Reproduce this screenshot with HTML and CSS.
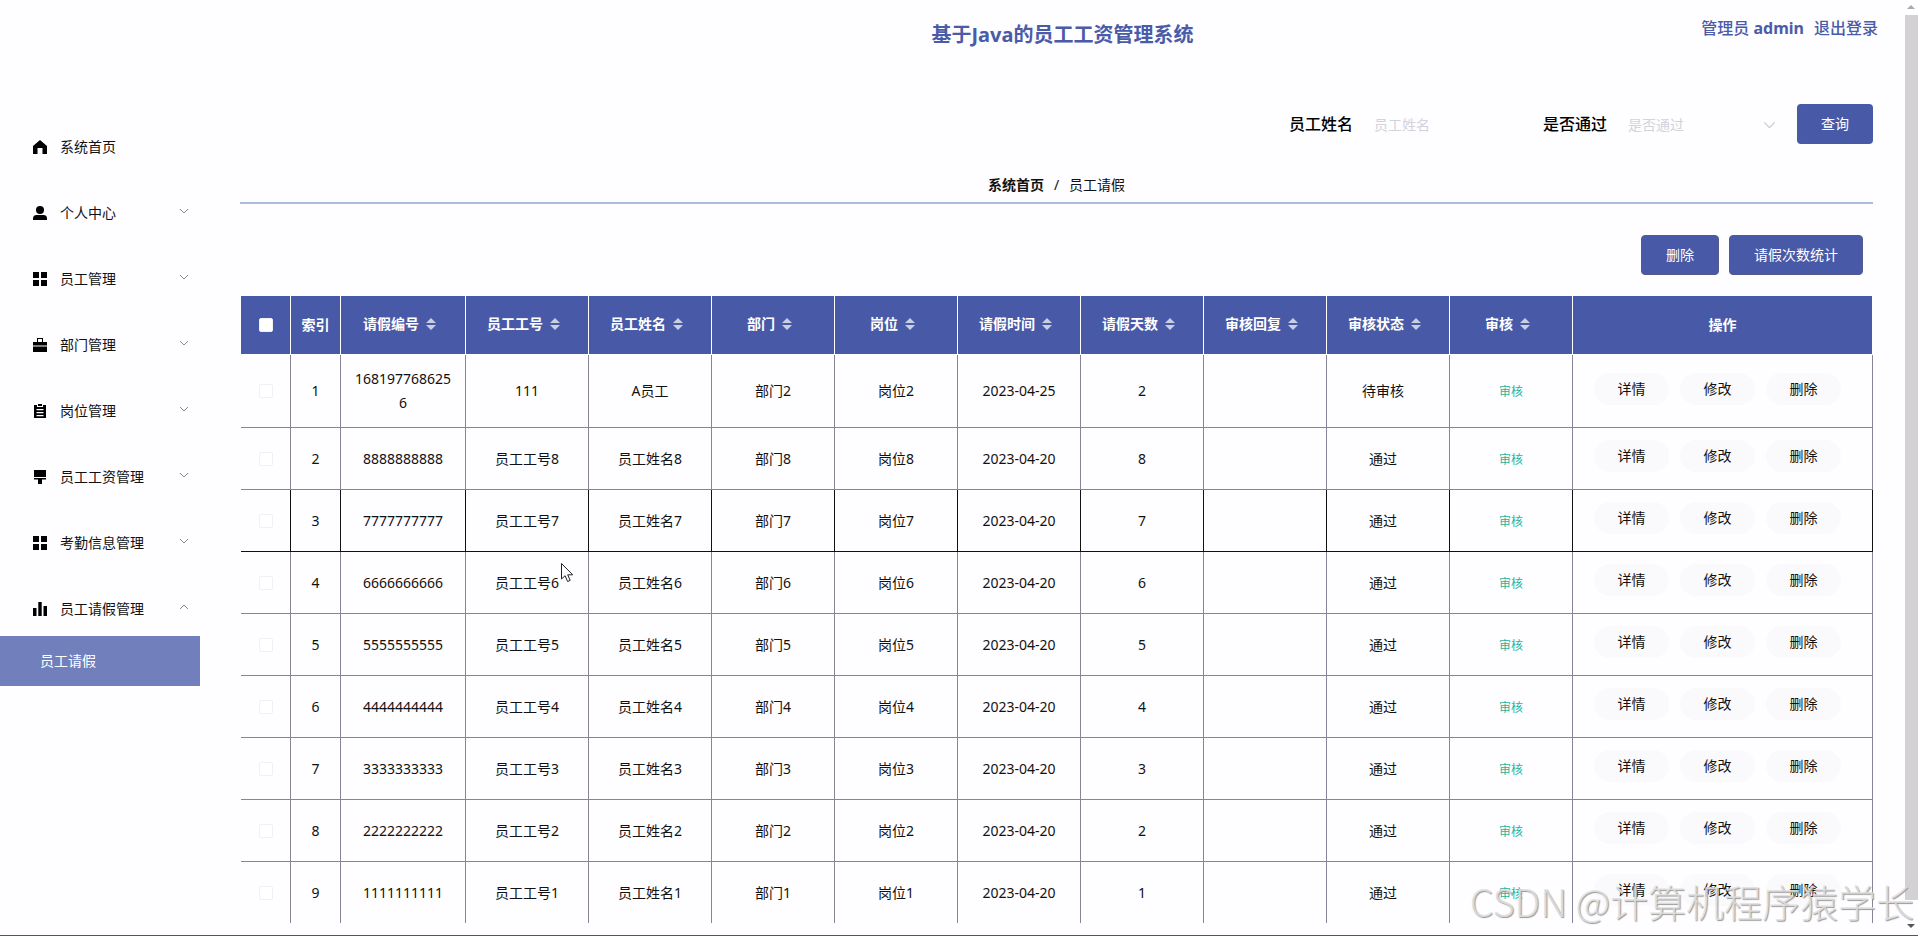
FILE: index.html
```html
<!DOCTYPE html>
<html lang="zh-CN">
<head>
    <meta charset="UTF-8">
    <meta name="viewport" content="width=device-width, initial-scale=1.0">
    <title>基于Java的员工工资管理系统</title>
    <link rel="stylesheet" href="styles.css">
</head>
<body>
    <div class="page">
        <div class="app">
            <header class="header">
                <h1 class="title">基于Java的员工工资管理系统</h1>
                <div class="user">
                    <span>管理员 <b>admin</b></span>
                    <a href="#">退出登录</a>
                </div>
            </header>

            <div class="body">
                <nav class="sidebar">
                    <a class="menu-item" href="#">
                        <svg class="icon" viewBox="0 0 14 14"><path d="M7 0 14 6v8H9.500V8h-5v6H0V6z"/></svg>
                        <span>系统首页</span>
                    </a>
                    <a class="menu-item" href="#">
                        <svg class="icon" viewBox="0 0 14 14"><circle cx="7" cy="4" r="4"/><path d="M0 14v-1.500Q0 9 3.500 9h7Q14 9 14 12.500V14z"/></svg>
                        <span>个人中心</span>
                        <svg class="arrow" viewBox="0 0 10 6"><path d="M1 1l4 4 4-4"/></svg>
                    </a>
                    <a class="menu-item" href="#">
                        <svg class="icon" viewBox="0 0 14 14"><path d="M0 0h6v6H0zM8 0h6v6H8zM0 8h6v6H0zM8 8h6v6H8z"/></svg>
                        <span>员工管理</span>
                        <svg class="arrow" viewBox="0 0 10 6"><path d="M1 1l4 4 4-4"/></svg>
                    </a>
                    <a class="menu-item" href="#">
                        <svg class="icon" viewBox="0 0 14 14"><path d="M4 0h6v4h4v3.500H0V4h4zM5 1v3h4V1zM0 8.500h14V14H0z" fill-rule="evenodd"/></svg>
                        <span>部门管理</span>
                        <svg class="arrow" viewBox="0 0 10 6"><path d="M1 1l4 4 4-4"/></svg>
                    </a>
                    <a class="menu-item" href="#">
                        <svg class="icon" viewBox="0 0 14 14"><path d="M1 1h3v2h6V1h3v13H1zM3.500 5v1.200h7V5zM3.500 8v1.200h7V8zM3.500 11v1.200h7V11z" fill-rule="evenodd"/><path d="M5 0h4v2H5z"/></svg>
                        <span>岗位管理</span>
                        <svg class="arrow" viewBox="0 0 10 6"><path d="M1 1l4 4 4-4"/></svg>
                    </a>
                    <a class="menu-item" href="#">
                        <svg class="icon" viewBox="0 0 14 14"><path d="M1 0h12v7H1zM1 8h12v1.500H9V14H5V9.500H1z"/></svg>
                        <span>员工工资管理</span>
                        <svg class="arrow" viewBox="0 0 10 6"><path d="M1 1l4 4 4-4"/></svg>
                    </a>
                    <a class="menu-item" href="#">
                        <svg class="icon" viewBox="0 0 14 14"><path d="M0 0h6v6H0zM8 0h6v6H8zM0 8h6v6H0zM8 8h6v6H8z"/></svg>
                        <span>考勤信息管理</span>
                        <svg class="arrow" viewBox="0 0 10 6"><path d="M1 1l4 4 4-4"/></svg>
                    </a>
                    <a class="menu-item" href="#">
                        <svg class="icon" viewBox="0 0 14 14"><path d="M0 6h3.500v8H0zM5.300 0h3.400v14H5.300zM10.500 4H14v10h-3.500z"/></svg>
                        <span>员工请假管理</span>
                        <svg class="arrow" viewBox="0 0 10 6"><path d="M1 5l4-4 4 4"/></svg>
                    </a>
                    <a class="submenu-item" href="#">员工请假</a>
                </nav>

                <main class="main">
                    <form class="search">
                        <div class="field">
                            <label for="name">员工姓名</label>
                            <input type="text" id="name" placeholder="员工姓名">
                        </div>
                        <div class="field">
                            <label for="pass">是否通过</label>
                            <div class="select-box">
                                <select id="pass">
                                    <option>是否通过</option>
                                </select>
                                <svg class="arrow" viewBox="0 0 10 6"><path d="M1 1l4 4 4-4"/></svg>
                            </div>
                        </div>
                        <button type="button" class="btn">查询</button>
                    </form>

                    <div class="breadcrumb">
                        <a href="#">系统首页</a>
                        <span>/</span>
                        <span>员工请假</span>
                    </div>

                    <div class="toolbar">
                        <button type="button" class="btn">删除</button>
                        <button type="button" class="btn">请假次数统计</button>
                    </div>

                    <div class="table-wrap">
                        <table>
                            <colgroup>
                                <col class="col-small">
                                <col class="col-small">
                                <col class="col-code">
                                <col span="9">
                                <col class="col-actions">
                            </colgroup>
                            <thead>
                                <tr id="head">
                                    <th><input type="checkbox" aria-label="全选"></th>
                                    <th>索引</th>
                                </tr>
                            </thead>
                            <tbody id="rows"></tbody>
                        </table>
                    </div>
                </main>
            </div>
        </div>

        <div class="scrollbar">
            <span class="scroll-up"></span>
            <div class="track"><div class="thumb"></div></div>
            <span class="scroll-down"></span>
        </div>
    </div>

    <svg class="cursor" viewBox="0 0 13 20"><path d="M.5.500v15.500l3.600-3.300 2.500 5.800 2.600-1.100-2.500-5.600h5z"/></svg>
    <div class="watermark">CSDN @计算机程序猿学长</div>

    <script src="script.js"></script>
</body>
</html>
```
FILE: styles.css
```css
* {
    box-sizing: border-box;
}
body {
    margin: 0;
    font-family: "Noto Sans", "Noto Sans CJK SC", sans-serif;
    font-size: 14px;
    line-height: 24px;
    color: #111;
    background-color: #fefdff;
    overflow: hidden;
}
a {
    color: inherit;
    text-decoration: none;
}
button, input, select {
    font-family: inherit;
    font-size: 14px;
}
.page {
    display: flex;
    height: 100vh;
    border-bottom: 1px solid #555;
}
.app {
    flex: 1;
    min-width: 0;
    display: flex;
    flex-direction: column;
}

/* header */
.header {
    display: grid;
    grid-template-columns: 1fr auto 1fr;
    height: 104px;
    padding-left: 220px;
    color: #4a5ba8;
}
.title {
    grid-column: 2;
    margin: 23px 0 0;
    font-size: 20px;
    line-height: 24px;
}
.user {
    display: flex;
    justify-content: flex-end;
    gap: 10px;
    margin: 16px 27px 0 0;
    font-size: 16px;
    font-weight: 500;
}

.body {
    flex: 1;
    min-height: 0;
    display: flex;
}

/* sidebar */
.sidebar {
    width: 200px;
    padding-top: 14px;
}
.menu-item {
    display: flex;
    align-items: center;
    height: 56px;
    margin-bottom: 10px;
    padding: 2px 11px 0 33px;
}
.menu-item:nth-last-child(2) {
    margin-bottom: 0;
}
.icon {
    width: 14px;
    height: 14px;
    margin-right: 13px;
}
.arrow {
    width: 10px;
    height: 6px;
    fill: none;
    stroke: #888;
}
.menu-item .arrow {
    margin: 0 0 4px auto;
}
.submenu-item {
    display: block;
    padding-left: 40px;
    line-height: 50px;
    color: #fff;
    background-color: #727fbd;
}

/* main */
.main {
    flex: 1;
    min-width: 0;
    display: flex;
    flex-direction: column;
    padding: 0 32px 12px 40px;
}
.search {
    display: flex;
    justify-content: flex-end;
    gap: 12px;
}
.field {
    display: flex;
    align-items: center;
    gap: 8px;
}
.field label {
    font-size: 16px;
    font-weight: 500;
    color: #000;
}
.field input, .field select {
    width: 170px;
    height: 40px;
    padding: 0 13px;
    border: none;
    outline: none;
    background: none;
    color: #d3d3dc;
    appearance: none;
}
.field input::placeholder {
    color: #d3d3dc;
}
.select-box {
    position: relative;
}
.select-box .arrow {
    position: absolute;
    right: 9px;
    top: 17px;
    width: 13px;
    height: 8px;
    stroke: #ccc;
    pointer-events: none;
}
.btn {
    height: 40px;
    padding: 0 24px 2px;
    border: none;
    border-radius: 4px;
    color: #fff;
    background-color: #485aa7;
}
.breadcrumb {
    display: flex;
    justify-content: center;
    gap: 10px;
    margin-top: 29px;
    padding-bottom: 6px;
    line-height: 23px;
    border-bottom: 2px solid #adbbde;
}
.breadcrumb a {
    font-weight: bold;
}
.toolbar {
    display: flex;
    justify-content: flex-end;
    gap: 10px;
    margin: 31px 10px 21px 0;
}
.toolbar .btn {
    border: 1px solid #555b8c;
}

/* table */
.table-wrap {
    flex: 1;
    min-height: 0;
    overflow: hidden;
    padding-left: 1px;
}
table {
    width: 100%;
    table-layout: fixed;
    border-collapse: separate;
    border-spacing: 0;
}
.col-small {
    width: 50px;
}
.col-code {
    width: 125px;
}
.col-actions {
    width: 300px;
}
th {
    height: 59px;
    padding: 0;
    color: #fff;
    background-color: #485aa7;
    border-right: 1px solid #fff;
    border-bottom: 1px solid #fff;
}
td {
    height: 62px;
    padding: 12px 10px;
    text-align: center;
    word-break: break-all;
    border-right: 1px solid #858597;
    border-bottom: 1px solid #858597;
}
tr.hover td {
    border-color: #111;
}
th input, td input {
    display: block;
    width: 14px;
    height: 14px;
    margin: 0 auto;
    appearance: none;
    border: 1px solid #f1f1f4;
    border-radius: 2px;
    background-color: #fff;
}
.sortable {
    display: flex;
    justify-content: center;
    align-items: center;
    padding-bottom: 2px;
}
.sort {
    width: 10px;
    height: 14px;
    margin: 0 7px;
    fill: #c9cfe2;
}
td.status {
    padding-right: 20px;
}
.audit {
    padding: 0;
    border: none;
    background: none;
    font-size: 12px;
    color: #27b59e;
}
.actions {
    display: flex;
    justify-content: center;
    gap: 11px;
    padding: 0 10px 5px 0;
}
.actions button {
    width: 75px;
    height: 32px;
    padding: 0 0 2px;
    border: none;
    border-radius: 16px;
    color: #111;
    background-color: #faf9fb;
}
td:last-child {
    padding: 0 10px;
}

/* scrollbar */
.scrollbar {
    display: flex;
    flex-direction: column;
    width: 13px;
}
.track {
    flex: 1;
}
.thumb {
    height: calc(100% - 20px);
    background-color: #d3d1d4;
}
.scroll-up, .scroll-down {
    width: 8px;
    border: 4px solid transparent;
}
.scroll-up {
    height: 9px;
    margin: 0 2px 6px;
    border-bottom-color: #aaa;
}
.scroll-down {
    height: 8px;
    margin: 4px 2px 3px;
    border-top-color: #555;
}

.cursor {
    position: absolute;
    left: 561px;
    top: 563px;
    width: 13px;
    height: 20px;
    fill: #fff;
    stroke: #222;
}
.watermark {
    position: absolute;
    right: 4px;
    bottom: 10px;
    font-family: "Noto Sans CJK SC", sans-serif;
    font-size: 38px;
    font-weight: 300;
    line-height: 50px;
    color: rgba(225, 225, 225, 0.85);
    text-shadow: 1px 1px 1px #999;
    pointer-events: none;
}
```
FILE: script.js
```js
const columns = ['请假编号', '员工工号', '员工姓名', '部门', '岗位', '请假时间', '请假天数', '审核回复', '审核状态', '审核'];
const list = [
    ['1681977686256', '111', 'A员工', '部门2', '岗位2', '2023-04-25', '2', '', '待审核']
];
for (let n = 8; n >= 1; n--) {
    list.push([String(n).repeat(10), '员工工号' + n, '员工姓名' + n, '部门' + n, '岗位' + n, '2023-04-20', n, '', '通过']);
}

const sortIcon = '<svg class="sort" viewBox="0 0 10 14"><path d="M5 1l5 5H0zM5 13l5-5H0z"/></svg>';
document.getElementById('head').innerHTML += columns.map(function (name) {
    return '<th><div class="sortable">' + name + sortIcon + '</div></th>';
}).join('') + '<th>操作</th>';

document.getElementById('rows').innerHTML = list.map(function (item, i) {
    const cells = item.map(function (value, c) {
        return '<td' + (c === 8 ? ' class="status"' : '') + '>' + value + '</td>';
    }).join('');
    return '<tr class="' + (i === 2 ? 'hover' : '') + '">' +
        '<td><input type="checkbox" aria-label="选择第' + (i + 1) + '行"></td>' +
        '<td>' + (i + 1) + '</td>' + cells +
        '<td><button type="button" class="audit">审核</button></td>' +
        '<td><div class="actions"><button type="button">详情</button><button type="button">修改</button><button type="button">删除</button></div></td>' +
        '</tr>';
}).join('');
```
